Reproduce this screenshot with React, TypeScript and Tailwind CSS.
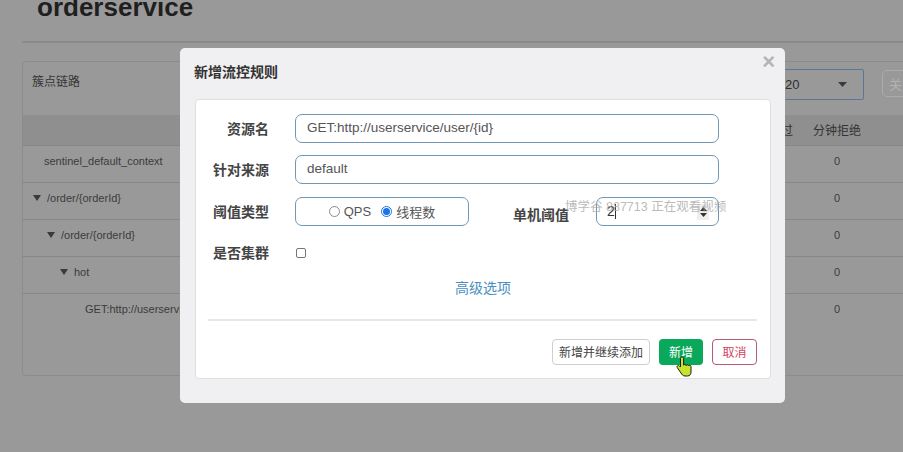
import React from "react";

const Tri = () => (
  <svg width="8" height="6" viewBox="0 0 8 6" className="mr-[6px] shrink-0">
    <path d="M0 0 L8 0 L4 6 Z" fill="#3a3a3a" />
  </svg>
);

const rows: { pl: number; tri: boolean; text: string }[] = [
  { pl: 21, tri: false, text: "sentinel_default_context" },
  { pl: 10, tri: true, text: "/order/{orderId}" },
  { pl: 24, tri: true, text: "/order/{orderId}" },
  { pl: 37, tri: true, text: "hot" },
  { pl: 62, tri: false, text: "GET:http://userservice/user/{id}" },
];

export default function App() {
  return (
    <div className="relative w-[903px] h-[452px] overflow-hidden bg-[#9a9999] font-['Liberation_Sans','Noto_Sans_CJK_SC',sans-serif]">
      {/* background page */}
      <div className="pl-[22px] flex flex-col">
        <div className="h-[43px] border-b-2 border-[#8a8a8a] flex flex-col">
          <h1 className="pl-[15px] -mt-[6px] text-[26px] leading-[26px] font-bold text-[#1f1f1f]">
            orderservice
          </h1>
        </div>
        <div className="mt-[18px] w-[940px] h-[315px] border border-[#8c8c8c] rounded-[4px]">
          <div className="h-[53px] flex items-start px-[9px]">
            <div className="pt-[11px] text-[12px] leading-[16px] text-[#363636] font-['Noto_Sans_CJK_SC',sans-serif]">
              簇点链路
            </div>
            <div className="ml-auto mt-[7px] w-[150px] h-[31px] border border-[#5a7896] rounded-[2px] flex items-center pl-[70px] pr-[16px] text-[13px] text-[#2e2e2e]">
              <span>20</span>
              <svg width="9" height="5" viewBox="0 0 9 5" className="ml-auto">
                <path d="M0 0 L9 0 L4.5 5 Z" fill="#3a3a3a" />
              </svg>
            </div>
            <div className="ml-[18px] mt-[8px] w-[70px] h-[27px] border border-[#acacac] rounded-[5px] flex items-center pl-[6px] text-[13px] text-[#b2b2b2] font-['Noto_Sans_CJK_SC',sans-serif]">
              关闭
            </div>
          </div>
          <div className="h-[31px] bg-[#8f8f90] border-b border-[#878787] flex items-center text-[12px] text-[#333] font-['Noto_Sans_CJK_SC',sans-serif]">
            <div className="flex-1" />
            <div className="w-[56px] text-center">通过</div>
            <div className="w-[56px] text-center">分钟拒绝</div>
            <div className="w-[96px]" />
          </div>
          {rows.map((r, i) => (
            <div
              key={i}
              className={`h-[37px] flex items-start pt-[8px] text-[11px] leading-[14px] text-[#3b3b3b] ${
                i < rows.length - 1 ? "border-b border-[#878787]" : ""
              }`}
            >
              <div className="flex-1 flex items-center" style={{ paddingLeft: r.pl }}>
                {r.tri && <Tri />}
                <span>{r.text}</span>
              </div>
              <div className="w-[56px] text-center">0</div>
              <div className="w-[56px] text-center">0</div>
              <div className="w-[96px]" />
            </div>
          ))}
        </div>
      </div>

      {/* modal */}
      <div className="absolute left-[180px] top-[48px] w-[605px] h-[355px] rounded-[5px] bg-[#f0eff1]">
        <div className="relative h-[51px] px-[14px] pt-[14px]">
          <div className="text-[14px] leading-[18px] font-bold text-[#333] font-['Noto_Sans_CJK_SC',sans-serif]">
            新增流控规则
          </div>
          <div className="absolute right-[10px] top-[3px] text-[22px] leading-[22px] font-bold text-[#b4b4b4]">
            ×
          </div>
        </div>
        <div className="ml-[15px] mr-[14px] h-[280px] bg-white border border-[#dedede] rounded-[4px] pt-[14px]">
          {/* 资源名 */}
          <div className="flex items-center h-[29px]">
            <div className="w-[73px] text-right text-[14px] font-bold text-[#444] font-['Noto_Sans_CJK_SC',sans-serif]">
              资源名
            </div>
            <div className="ml-[26px] w-[424px] h-[29px] border border-[#7097b5] rounded-[7px] flex items-center pl-[11px] text-[13.5px] text-[#555]">
              GET:http://userservice/user/{"{id}"}
            </div>
          </div>
          {/* 针对来源 */}
          <div className="flex items-center h-[29px] mt-[12px]">
            <div className="w-[73px] text-right text-[14px] font-bold text-[#444] font-['Noto_Sans_CJK_SC',sans-serif]">
              针对来源
            </div>
            <div className="ml-[26px] w-[424px] h-[29px] border border-[#7097b5] rounded-[7px] flex items-center pl-[11px] text-[13.5px] text-[#555]">
              default
            </div>
          </div>
          {/* 阈值类型 */}
          <div className="flex items-center h-[29px] mt-[13px]">
            <div className="w-[73px] text-right text-[14px] font-bold text-[#444] font-['Noto_Sans_CJK_SC',sans-serif]">
              阈值类型
            </div>
            <div className="ml-[26px] w-[174px] h-[29px] border border-[#7097b5] rounded-[7px] flex items-center justify-center text-[13px] text-[#555]">
              <span className="w-[11px] h-[11px] rounded-full border border-[#8a8a8a] bg-white mr-[4px]" />
              <span>QPS</span>
              <span className="ml-[10px] w-[11px] h-[11px] rounded-full border-[1px] border-[#1a73e8] bg-white flex items-center justify-center mr-[4px]">
                <span className="w-[7px] h-[7px] rounded-full bg-[#1a73e8]" />
              </span>
              <span className="font-['Noto_Sans_CJK_SC',sans-serif]">线程数</span>
            </div>
            <div className="w-[100px] text-right text-[14px] font-bold text-[#444] pt-[6px] font-['Noto_Sans_CJK_SC',sans-serif]">
              单机阈值
            </div>
            <div className="ml-[27px] w-[123px] h-[29px] border border-[#7097b5] rounded-[7px] flex items-center pl-[10px] pr-[9px] text-[14px] text-[#333]">
              <span>2</span>
              <span className="w-px h-[15px] bg-[#333]" />
              <span className="ml-auto w-[12px] h-[16px] bg-[#eeeeee] flex flex-col items-center justify-center gap-[2px]">
                <svg width="7" height="4" viewBox="0 0 7 4">
                  <path d="M0 4 L7 4 L3.5 0 Z" fill="#333" />
                </svg>
                <svg width="7" height="4" viewBox="0 0 7 4">
                  <path d="M0 0 L7 0 L3.5 4 Z" fill="#333" />
                </svg>
              </span>
            </div>
          </div>
          {/* 是否集群 */}
          <div className="flex items-center h-[29px] mt-[12px]">
            <div className="w-[73px] text-right text-[14px] font-bold text-[#444] font-['Noto_Sans_CJK_SC',sans-serif]">
              是否集群
            </div>
            <div className="ml-[27px] w-[10px] h-[10px] border border-[#767676] rounded-[2px] bg-white" />
          </div>
          {/* 高级选项 */}
          <div className="mt-[10px] h-[20px] text-center text-[14px] leading-[20px] text-[#4a8fc2] font-['Noto_Sans_CJK_SC',sans-serif]">
            高级选项
          </div>
          <div className="mt-[22px] ml-[12px] mr-[13px] h-[2px] bg-[#e8e8e8]" />
          <div className="mt-[18px] mr-[13px] flex justify-end gap-[9px] text-[12px] font-['Noto_Sans_CJK_SC',sans-serif]">
            <div className="w-[98px] h-[26px] border border-[#cfcfcf] rounded-[4px] flex items-center justify-center text-[#444]">
              新增并继续添加
            </div>
            <div className="w-[44px] h-[26px] rounded-[4px] bg-[#0aa85a] flex items-center justify-center text-white">
              新增
            </div>
            <div className="w-[45px] h-[26px] border border-[#b85a72] rounded-[4px] flex items-center justify-center text-[#d2425e]">
              取消
            </div>
          </div>
        </div>
      </div>

      {/* watermark */}
      <div className="absolute left-[565px] top-[199px] text-[12.5px] leading-[16px] text-[#a8a8a8]/80 font-['Liberation_Sans','Noto_Sans_CJK_SC',sans-serif] whitespace-nowrap">
        博学谷 887713 正在观看视频
      </div>

      {/* cursor */}
      <svg className="absolute left-[676px] top-[356px]" width="16" height="21" viewBox="0 0 16 21">
        <path
          d="M6 1 C5 1 4.5 1.6 4.5 2.5 L4.5 11 L3.5 10 C2.8 9.3 1.8 9.3 1.3 10 C0.8 10.6 1 11.4 1.5 12 L5 17 C5.8 18.5 7 20 9 20 L11.5 20 C13.8 20 15 18.3 15 16 L15 10.5 C15 9.7 14.4 9.2 13.7 9.2 C13.2 9.2 12.8 9.5 12.6 9.9 C12.5 9.2 11.9 8.8 11.3 8.8 C10.8 8.8 10.3 9.1 10.1 9.6 C10 8.9 9.4 8.5 8.8 8.5 C8.3 8.5 7.8 8.7 7.6 9.1 L7.6 2.5 C7.6 1.6 7 1 6 1 Z"
          fill="#c6e42c"
          stroke="#1a1a1a"
          strokeWidth="1"
        />
      </svg>
    </div>
  );
}
